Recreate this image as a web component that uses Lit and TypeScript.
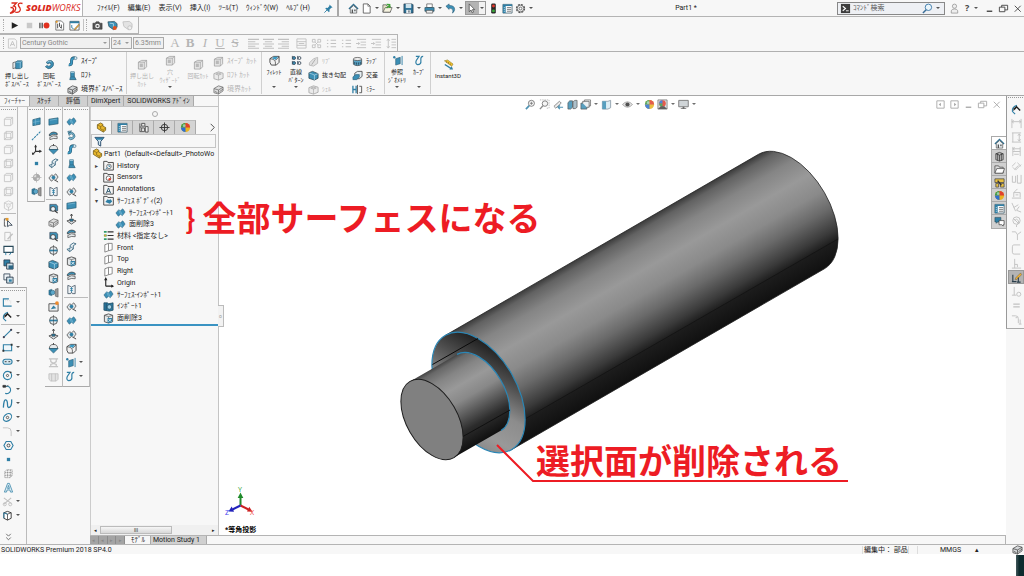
import { LitElement, html, css, svg, nothing } from "lit";
import { customElement, property } from "lit/decorators.js";
import { classMap } from "lit/directives/class-map.js";

/* Every glyph is drawn on a 12 x 12 grid. */
const surface = svg`<path d="M1 6.500 4 3l1.800 1.200L8.500 2 11 5.500 8 9.500 6.200 8 3.600 10z" fill="#3c8fb5" stroke="#2a5f7a" stroke-width=".6"/><path d="M4 3l2 5M5.800 4.200 8 9" stroke="#9bd0e6" stroke-width=".5" fill="none"/>`;
const cubeLine = svg`<path d="M1.500 3.500h7v7h-7zM3.500 1.500h7v7M1.500 3.500l2-2M8.500 3.500l2-2M8.500 10.500l2-2" fill="none" stroke="currentColor" stroke-width=".9"/>`;
const glyphs: Record<string, unknown> = {
  surface,
  cube: cubeLine,
  cubeB: svg`<path d="M3.500 1.500v7h7M3.500 8.500l-2 2M3.500 1.500h7v7l-2 2h-7v-7zM1.500 3.500h7v7M8.500 3.500l2-2" fill="none" stroke="currentColor" stroke-width=".9"/>`,
  cubeC: svg`<path d="M6 1l4.500 2v6L6 11.500 1.500 9V3zM1.500 3 6 5.500 10.500 3M6 5.500v6" fill="none" stroke="currentColor" stroke-width=".8"/><circle cx="6" cy="6" r="2" fill="#eee" stroke="currentColor" stroke-width=".6"/>`,
  plane: svg`<path d="M2 4l8-2v7l-8 1.500z" fill="#3c8fb5" stroke="#24576f" stroke-width=".7"/><path d="M5 3.300v6.500M2 7l8-1.500" stroke="#8cc4dc" stroke-width=".5"/>`,
  flat: svg`<path d="M1 3.500 11 2v6.500L1 10z" fill="#3c8fb5" stroke="#24576f" stroke-width=".7"/><path d="M2 4.600l8-1.200" stroke="#8cc4dc" stroke-width=".6" fill="none"/>`,
  axis: svg`<path d="M1 11 11 1" stroke="#2f7fa5" stroke-width="1.100" stroke-dasharray="2.500 1"/>`,
  coord: svg`<path d="M5 8V1.500M5 8h6M5 8l-3 3" stroke="#333" stroke-width="1.200" fill="none"/><path d="M3.500 3.500 5 .5l1.500 3zM9 6.300 12 8 9 9.700zM1 9l.3 3 2.700-1z" fill="#333"/>`,
  point: svg`<rect x="4.200" y="4.200" width="3.600" height="3.600" fill="#2f7fa5"/>`,
  target: svg`<circle cx="6" cy="6" r="3.500" fill="#ddd" stroke="#aaa"/><path d="M6 2.500V6h3.500A3.500 3.500 0 0 0 6 2.500zM6 6v3.500A3.500 3.500 0 0 1 2.500 6zM6 .5v2M6 9.500v2M.5 6h2M9.500 6h2" fill="#aaa" stroke="#aaa" stroke-width=".7"/>`,
  mate: svg`<path d="M1 3.500 4 2.500v7L1 8.500z" fill="#2f7fa5" stroke="#24576f" stroke-width=".5"/><circle cx="5" cy="6" r="2.500" fill="#5ba7c9" stroke="#24576f" stroke-width=".6"/><path d="M8 2.500l3-1v9.500l-3-1z" fill="#999" stroke="#555" stroke-width=".6"/>`,
  revolve: svg`<path d="M2.500 3.500Q5 .5 8.500 2q3 2 1.500 5.500Q8 11 4.500 10.500L1.500 8.500 3 7q2 1.500 4 .3 1.500-2-.5-3L4 5.500z" fill="#3c8fb5" stroke="#24576f" stroke-width=".7"/><path d="M3.500 3.300Q6 1.500 8.200 3.200" stroke="#bfe0ee" stroke-width=".7" fill="none"/>`,
  ring: svg`<path d="M3 3.500A4 4 0 1 1 2.500 9l1.800-1.500A2 2 0 1 0 5 4.500L3.500 6 2 1.500 6 1z" fill="#7cb9d4" stroke="#24576f" stroke-width=".7"/>`,
  sweep: svg`<path d="M2 9.500q3 .5 3-2.500V5q.2-3 3.500-3" fill="none" stroke="#24576f" stroke-width="3.200"/><path d="M2 9.500q3 .5 3-2.500V5q.2-3 3.500-3" fill="none" stroke="#3c9ac4" stroke-width="2"/><circle cx="9.300" cy="2.300" r="1.600" fill="#d9ecf4" stroke="#24576f" stroke-width=".6"/>`,
  loft: svg`<path d="M4 2h4v5l2 3.500H3L4 7z" fill="#3c8fb5" stroke="#24576f" stroke-width=".7"/><path d="M4 2.500h4" stroke="#bfe0ee"/><path d="M4.200 7.500h4.500" stroke="#24576f" stroke-width=".5"/>`,
  boundary: svg`<path d="M1 5l5-3 5 1.500v4L6 11 1 9.500z" fill="#d5d8da" stroke="#444" stroke-width=".8"/><path d="M1 5l5 1.500L11 3.500M6 6.500V11M2 8l3 1.500M7 8.500l4-3" fill="none" stroke="#444" stroke-width=".8"/>`,
  extrude: svg`<path d="M1 4l5-1.500V9L1 10.500z" fill="#dfe5e8" stroke="#444" stroke-width=".7"/><path d="M4 3.500 6 2h5v7l-2 1.500H4z" fill="#3c8fb5" stroke="#24576f" stroke-width=".7"/><path d="M4 3.500h5v7M9 3.500 11 2" stroke="#bfe0ee" stroke-width=".6" fill="none"/>`,
  cut: svg`<path d="M1.500 3.500 5 1.500h5.500v7L8 11H1.500z" fill="#e3e3e3" stroke="#777" stroke-width=".7"/><path d="M1.500 3.500H8V11M8 3.500l2.500-2" stroke="#777" stroke-width=".6" fill="none"/><rect x="3" y="5" width="3.400" height="3.800" fill="#aaa"/>`,
  fillet: svg`<path d="M1 4l4-2.500h6v6.500l-3 3H2.500L1 8z" fill="#f1f1f1" stroke="#333" stroke-width=".9"/><path d="M1 4q5 0 6 3.500V11M11 2 7 6" fill="none" stroke="#333" stroke-width=".7"/><path d="M5 2h5L7 5.500Q6 4 3.500 4z" fill="#3c9ac4"/>`,
  pattern: svg`<g fill="#3c9ac4" stroke="#345" stroke-width=".9"><path d="M1.500 1v4M1.500 6.500v4"/><circle cx="3.300" cy="3.300" r="1.600"/><circle cx="3.300" cy="8.800" r="1.600"/></g><g fill="#f3f3f3" stroke="#345" stroke-width=".9"><circle cx="9.200" cy="3.300" r="1.600"/><circle cx="9.200" cy="8.800" r="1.600"/><path d="M7.300 1v4M7.300 6.500v4"/></g>`,
  rib: svg`<path d="M1.500 10V7.500L6 3l4.500-1.500V8L6 11z" fill="#ddd" stroke="#999" stroke-width=".8"/><path d="M4 9.500 8 3.500" stroke="#999"/>`,
  draft: svg`<path d="M1 3l4-1.500L11 4v5L7 11 1 9z" fill="#3c8fb5" stroke="#24424f" stroke-width=".8"/><path d="M1 3l6 2.500V11M7 5.500 11 4" stroke="#cfe9f4" stroke-width=".6" fill="none"/>`,
  shell: svg`<path d="M1 4l5-2 5 1.500V9L6 11 1 9.500z" fill="#e7e7e7" stroke="#888" stroke-width=".8"/><path d="M3 4.500 6 3.400l3 1L6 5.600zM6 5.600V11" fill="#ccc" stroke="#888" stroke-width=".6"/>`,
  wrap: svg`<path d="M1.500 3.500v5.500c2 2 7 2 9 0V3.500" fill="#5ba7c9" stroke="#333" stroke-width=".7"/><ellipse cx="6" cy="3.300" rx="4.500" ry="1.700" fill="#eee" stroke="#333" stroke-width=".7"/><path d="M3 6.500v2.500M5 7v2.500M7 7v2.500M9 6.500v2.500" stroke="#123" stroke-width=".7"/>`,
  intersect: svg`<path d="M3 3.500 6 1.500h5V7L8 9.500H3z" fill="#e6eef2" stroke="#333" stroke-width=".8"/><path d="M1 7.500 4 5h4v3l-3 2.500H1z" fill="#3c8fb5" stroke="#24576f" stroke-width=".6"/>`,
  mirror: svg`<path d="M1 2v8M4.500 2v8M1 6h3.500" stroke="#2f7fa5" stroke-width="1.400"/><path d="M6 1v10" stroke="#333" stroke-width=".8"/><path d="M8 2.500h2.500v7H8" fill="none" stroke="#444" stroke-width=".9"/>`,
  refgeo: svg`<circle cx="2.500" cy="2.500" r="1.300" fill="#2f7fa5"/><path d="M4 4l5-1.500v7L4 11z" fill="#3c8fb5" stroke="#24576f" stroke-width=".6"/><path d="M11 1v10" stroke="#2f7fa5"/>`,
  curve: svg`<path d="M2 1.500h3.500L2.500 6Q1 9.500 4 10.500 8 10.500 7.500 6 7 1.500 10 1.500" fill="none" stroke="#2f7fa5" stroke-width="1.300"/>`,
  instant: svg`<path d="M1.500 2 5 1l6 4.500-1.500 2.500z" fill="#f0c030" stroke="#7a6410" stroke-width=".5"/><path d="M4 2.500v1.500M6 3.500V5M8 5v1.300" stroke="#5b4a08" stroke-width=".6"/><path d="M2 6l7 4.500" stroke="#2f7fa5" stroke-width="1.500"/><path d="M7 11.500h4L9.500 8z" fill="#2f7fa5"/>`,
  home: svg`<path d="M1 6.500 6 1.500l5 5" fill="none" stroke="#2f6f90" stroke-width="1.400"/><path d="M2.500 6v5h7V6L6 2.800z" fill="#eef4f7" stroke="#444" stroke-width=".7"/><path d="M4 7h1.500v4H4zM6.800 7h1.500v2H6.800z" fill="#555"/>`,
  doc: svg`<path d="M2.500 1h5L10 3.500V11H2.500z" fill="#fff" stroke="#555" stroke-width=".9"/><path d="M7.500 1v2.500H10" fill="none" stroke="#555" stroke-width=".7"/>`,
  open: svg`<path d="M1 2h3.500l1 1.500H9V10H1z" fill="#e8e3c8" stroke="#555" stroke-width=".8"/><path d="M1 10l2.500-5H11L9 10z" fill="#f6f3df" stroke="#555" stroke-width=".8"/><path d="M5 5.500 8 3M8.500 5.500V1.800L5 1.600" stroke="#3fa535" stroke-width="1.300" fill="none"/>`,
  save: svg`<path d="M1 1h9l1 1v9H1z" fill="#2d7296" stroke="#234" stroke-width=".7"/><path d="M3 1h6v4.500H3z" fill="#cfe3ec"/><path d="M3.500 7.500h5V11h-5z" fill="#e9eff2"/><path d="M6.500 8v2.500" stroke="#234"/>`,
  print: svg`<path d="M3 1h6v4H3z" fill="#fff" stroke="#444" stroke-width=".7"/><path d="M1 5h10v4H1z" fill="#3c8fb5" stroke="#24424f" stroke-width=".7"/><path d="M2.500 8h7v3h-7z" fill="#eee" stroke="#444" stroke-width=".7"/>`,
  undo: svg`<path d="M1 3.500 4.500 1v1.700Q10.500 2.500 10.500 7q0 2.500-2.500 4 .8-1.500.5-3Q8 5.500 4.500 5.500V7z" fill="#3c8fb5" stroke="#24576f" stroke-width=".6"/>`,
  arrow: svg`<path d="M3.500 1v8.500l2-1.800 1.300 3L8.200 10 7 7.200h2.500z" fill="#fff" stroke="#444" stroke-width=".8"/>`,
  traffic: svg`<rect x="3.500" y=".5" width="5" height="11" rx="1.500" fill="#262626"/><circle cx="6" cy="3.200" r="1.600" fill="#e0352b"/><circle cx="6" cy="8.600" r="1.600" fill="#3aa83a"/>`,
  sheet: svg`<path d="M1 1.500h10v9.500H1z" fill="#f5f8fa" stroke="#3c5a6a" stroke-width=".8"/><path d="M1 1.500h10v1.800H1zM1 3h3v8H1z" fill="#2f7fa5"/><path d="M5.500 5h4.500M5.500 7h4.500M5.500 9h4.500" stroke="#444" stroke-width=".7"/><path d="M2 5h1M2 7h1M2 9h1" stroke="#fff" stroke-width=".8"/>`,
  gear: svg`<circle cx="6" cy="6" r="4.300" fill="none" stroke="#555" stroke-width="1.500" stroke-dasharray="2.200 1.170"/><circle cx="6" cy="6" r="3.600" fill="#eee" stroke="#555" stroke-width=".8"/><circle cx="6" cy="6" r="1.500" fill="#fff" stroke="#555" stroke-width=".8"/>`,
  pin: svg`<path d="M7 1.500 10.500 5l-1.500.3-2 2 .2 1.700L6.500 10 2.500 6l.8-.8 1.700.2 2-2z" fill="#2f7fa5"/><path d="M4.500 7.500 1.500 10.500" stroke="#2f7fa5"/>`,
  user: svg`<circle cx="6" cy="3.500" r="2.300" fill="#eee" stroke="#999" stroke-width=".9"/><path d="M2.500 11V8.500Q3 6.500 6 6.500t3.500 2V11z" fill="#eee" stroke="#999" stroke-width=".9"/>`,
  min: svg`<path d="M3 9h6" stroke="currentColor" stroke-width="1.500"/>`,
  restore: svg`<path d="M1.500 4.500h6v5h-6zM4 4.500v-2h6.500v5h-3" fill="none" stroke="currentColor" stroke-width="1"/>`,
  close: svg`<path d="M3 3l6.500 6.500M9.500 3 3 9.500" stroke="currentColor" stroke-width="1"/>`,
  paneL: svg`<path d="M2 2h8v8H2z" fill="none" stroke="currentColor"/><path d="M6.500 4 4 6l2.500 2z" fill="currentColor"/>`,
  paneR: svg`<path d="M2 2h8v8H2z" fill="none" stroke="currentColor"/><path d="M5.500 4 8 6 5.500 8z" fill="currentColor"/>`,
  lens: svg`<circle cx="7" cy="4.700" r="3.500" fill="#eaf5fb" stroke="#3c78a8" stroke-width="1"/><path d="M4.500 7.300 1 11" stroke="#3c6f98" stroke-width="1.600"/>`,
  prompt: svg`<path d="M1 1h10v10H1z" fill="#3d3d3d"/><path d="M3 3.500 6 6 3 8.500" fill="none" stroke="#fff" stroke-width="1.200"/><path d="M6.500 8.500h3" stroke="#fff"/>`,
  play: svg`<path d="M3 2.500v7L10 6z" fill="#222"/>`,
  stop: svg`<path d="M3 3h6v6H3z" fill="#c9c9c9"/>`,
  rec: svg`<path d="M1 3v6M3.500 3v6" stroke="#555" stroke-width="1.500"/><circle cx="8.200" cy="6" r="3.200" fill="#e1301e"/>`,
  script: svg`<path d="M2 1h6l2.500 2.500V11H2z" fill="#fff" stroke="#555" stroke-width=".8"/><path d="M4 4v5M6 3v4l2 2M8 5v4" stroke="#333" stroke-width=".9" fill="none"/><circle cx="3" cy="2" r="1.200" fill="#e39a2d"/>`,
  scriptEdit: svg`<path d="M1 1.500h10V11H1z" fill="#fff" stroke="#444" stroke-width=".8"/><path d="M1 1.500h10v2H1z" fill="#2f7fa5"/><path d="M3 5.500v3l2 1" stroke="#2f7fa5" fill="none"/><path d="M10.500 4.500 6 9.500l-.5 1.500L7 10.500l4.500-5z" fill="#e3a838" stroke="#654" stroke-width=".4"/>`,
  camera: svg`<path d="M1 3.500h2.500L4.500 2h3l1 1.500H11V10H1z" fill="#555" stroke="#333" stroke-width=".6"/><circle cx="6" cy="6.600" r="2.500" fill="#f4f4f4"/><circle cx="6" cy="6.600" r="1.200" fill="#555"/>`,
  video: svg`<path d="M1 2l7-.5L11 4v4l-4 2.500L2 7z" fill="#3c8fb5" stroke="#24424f" stroke-width=".7"/><path d="M3 3.500l4 .5v4" stroke="#d9eef6" stroke-width=".7" fill="none"/><circle cx="8.500" cy="8.700" r="2.200" fill="#e1501e"/>`,
  videoOff: svg`<path d="M1 2l7-.5L11 4v4l-4 2.500L2 7z" fill="#e3e3e3" stroke="#bbb" stroke-width=".8"/><circle cx="8.500" cy="8.500" r="2.200" fill="#eee" stroke="#bbb" stroke-width=".8"/>`,
  note: svg`<path d="M1.500 1h7L10.500 3v8h-9z" fill="none" stroke="currentColor" stroke-width=".9"/><path d="M3.500 9 6 3.500 8.500 9M4.500 7.200h3" fill="none" stroke="currentColor"/>`,
  alignL: svg`<path d="M0 1.500h12M0 4h8M0 6.500h12M0 9h8M0 11.300h12" stroke="currentColor" stroke-width="1.100"/>`,
  alignC: svg`<path d="M0 1.500h12M2 4h8M0 6.500h12M2 9h8M0 11.300h12" stroke="currentColor" stroke-width="1.100"/>`,
  alignR: svg`<path d="M0 1.500h12M4 4h8M0 6.500h12M4 9h8M0 11.300h12" stroke="currentColor" stroke-width="1.100"/>`,
  fit: svg`<path d="M1 1h10v10H1zM1 4h10M1 8h10M3 6h6" fill="none" stroke="currentColor"/>`,
  stack: svg`<path d="M1.500 1.500h3v3h-3zM7.500 1.500h3v3h-3zM1.500 7.500h3v3h-3zM7.500 7.500h3v3h-3zM4.500 4.500l3 3M7.500 4.500l-3 3" fill="none" stroke="currentColor"/>`,
  list: svg`<path d="M1 2.500h1.500M1 6h1.500M1 9.500h1.500M5 2.500h6M5 6h6M5 9.500h6" stroke="currentColor" stroke-width="1.200"/>`,
  indent: svg`<path d="M1 1.500h10M5 4.500h6M5 7.500h6M1 10.500h10M0 6h4M2.500 4.500 4 6 2.500 7.500" fill="none" stroke="currentColor"/>`,
  spacing: svg`<path d="M2.500 1v10M1 3l1.500-2L4 3M1 9l1.500 2L4 9M6 1.500h5M6 4.500h5M6 7.500h5M6 10.500h5" fill="none" stroke="currentColor"/>`,
  zoomFit: svg`<circle cx="7" cy="4.700" r="3.300" fill="#f4f4f4" stroke="#555" stroke-width=".9"/><path d="M4.600 7.200 1 11" stroke="#2f7fa5" stroke-width="1.800"/><path d="M7 3v3.400M5.300 4.700h3.400" stroke="#555" stroke-width=".8"/>`,
  zoomArea: svg`<path d="M1 1h10v9H8" fill="none" stroke="#888" stroke-width=".7" stroke-dasharray="1.500 1"/><circle cx="6.500" cy="5" r="3" fill="#f4f4f4" stroke="#555" stroke-width=".9"/><path d="M4.300 7.300 1 11" stroke="#777" stroke-width="1.500"/>`,
  prevView: svg`<path d="M1 8 7 2.500 9 4.500 3 10z" fill="#e8e8e8" stroke="#555" stroke-width=".8"/><path d="M11 9H6M7.500 7 5.500 9l2 2" fill="none" stroke="#2f7fa5" stroke-width="1.300"/>`,
  section: svg`<path d="M1 4l2-2h3v7l-2 2H1z" fill="#3c8fb5" stroke="#333" stroke-width=".7"/><path d="M6.500 3l2-1.500H11V9l-2 1.500H6.500z" fill="#9fb6c2" stroke="#333" stroke-width=".7"/>`,
  views: svg`<path d="M1 4.500h6.500V11H1z" fill="#3c8fb5" stroke="#333" stroke-width=".7"/><path d="M3 4.500v-2h7V9H7.500" fill="#e8eef1" stroke="#333" stroke-width=".8"/><path d="M5 2.500V1h6.500v6.500H10" fill="none" stroke="#333" stroke-width=".7"/>`,
  display: svg`<path d="M1.500 2.500h6l3-1v8l-3 1.500h-6z" fill="#d9ecf4" stroke="#678" stroke-width=".8"/><path d="M1.500 2.500h4v8.500h-4z" fill="#3c8fb5"/>`,
  eye: svg`<path d="M.5 6Q6 0 11.500 6 6 12 .5 6z" fill="#ddd" stroke="#888" stroke-width=".8"/><circle cx="6" cy="6" r="2.300" fill="#333"/>`,
  appearance: svg`<circle cx="6" cy="6" r="5" fill="#e8b320"/><path d="M6 6V1a5 5 0 0 0-5 5z" fill="#3a9a4a"/><path d="M6 6V1a5 5 0 0 1 5 5z" fill="#e0402f"/><path d="M6 6H1a5 5 0 0 0 5 5z" fill="#2d6fd0"/><circle cx="4.500" cy="4" r="1.500" fill="#fff" opacity=".5"/>`,
  scene: svg`<path d="M1 1h10v10H1z" fill="#ddd" stroke="#555" stroke-width=".8"/><circle cx="6" cy="5" r="3.600" fill="#e0402f"/><path d="M6 5V1.400A3.600 3.600 0 0 0 2.400 5z" fill="#2d6fd0"/><path d="M2.400 5H6v3.600A3.600 3.600 0 0 1 2.400 5z" fill="#3a9a4a"/><path d="M1 11l3-3h4l3 3z" fill="#444"/>`,
  monitor: svg`<path d="M.8 1.500h10.400v7H.8z" fill="#c8ced2" stroke="#555" stroke-width=".9"/><path d="M5 8.500h2v1.500h2V11H3v-1h2z" fill="#555"/>`,
  part: svg`<path d="M1.500 3 5 1l2.500 1.500v2L10.500 6v3L8 11 1.500 7z" fill="#e7b62c" stroke="#6a5312" stroke-width=".8"/><path d="M1.500 3 5 5v2.500L8 9v2M5 5l2.500-1.500M8 8.500l2.500-2" fill="none" stroke="#6a5312" stroke-width=".6"/>`,
  config: svg`<path d="M2 1.500v9h2M2 5.500h2" fill="none" stroke="#555"/><path d="M4 1.500h3.500v3H4zM4 6.500h3v4H4zM8 5h3v6H8z" fill="#eee" stroke="#444" stroke-width=".9"/>`,
  cross: svg`<circle cx="6" cy="6" r="3.500" fill="none" stroke="#333"/><path d="M6 .5v11M.5 6h11" stroke="#333"/>`,
  funnel: svg`<path d="M1 1.500h10L7.300 6v5l-2.600-1.500V6z" fill="#cfe5ef" stroke="#246" stroke-width="1"/><path d="M1.500 2h9L9 4H3z" fill="#2f7fa5"/>`,
  folder: svg`<path d="M.8 1.500h3.700l.8 1.200h6V11H.8z" fill="#f4f4f4" stroke="#444" stroke-width="1"/><circle cx="6.500" cy="7" r="2.500" fill="none" stroke="#555" stroke-width=".8"/><path d="M6.500 5.500V7h1.500M3 9.500l2-1" stroke="#2f7fa5" fill="none"/>`,
  folderS: svg`<path d="M.8 1.500h3.700l.8 1.200h6V11H.8z" fill="#f4f4f4" stroke="#444" stroke-width="1"/><circle cx="6" cy="6.800" r="2.500" fill="#fff" stroke="#444" stroke-width=".8"/><circle cx="7.300" cy="8" r="1.400" fill="#e0402f"/>`,
  folderA: svg`<path d="M.8 1.500h3.700l.8 1.200h6V11H.8z" fill="#f4f4f4" stroke="#444" stroke-width="1"/><path d="M3.700 10 6 4.300 8.300 10M4.600 8.300h2.800" stroke="#234f66" fill="none"/>`,
  folderF: svg`<path d="M.8 1.500h3.700l.8 1.200h6V11H.8z" fill="#f4f4f4" stroke="#444" stroke-width="1"/><path d="M2.500 7.500 5 4.500l1.500 1 2-1L10 7 7.500 9.500z" fill="#2f7fa5"/>`,
  folderN: svg`<path d="M1 3h10v8H1z" fill="#eee" stroke="#444" stroke-width=".9"/><path d="M3 9l3-4 3 3z" fill="#2f7fa5"/><circle cx="9.800" cy="2.300" r="2" fill="#ef8a2b"/>`,
  material: svg`<path d="M1 2h3M1 6h3M1 10h3" stroke="#2f9a6a" stroke-width="2"/><path d="M5 2h6.500M5 6h6.500M5 10h6.500" stroke="#333" stroke-width="1.200"/><circle cx="2.500" cy="6" r="1.200" fill="#e7a62c"/>`,
  refplane: svg`<path d="M2 3l4-1.500V9.500L2 11zM6 1.500h4v7L6 9.500" fill="#fff" stroke="#777" stroke-width=".9"/>`,
  origin: svg`<path d="M3 10V2M3 10h8" stroke="#222" stroke-width="1.200" fill="none"/><path d="M1.200 3.500 3 0l1.800 3.500zM9 8.200 12 10l-3 1.800z" fill="#222"/>`,
  imported: svg`<path d="M1 2h4l1 1 5-1v8L7 11 1 10z" fill="#2d7ba3" stroke="#1c4458" stroke-width=".8"/><circle cx="7" cy="6.500" r="2.500" fill="#9fd0e4" stroke="#1c4458" stroke-width=".7"/><path d="M3.500 2.500v8" stroke="#1c4458" stroke-width=".7"/>`,
  delface: svg`<path d="M1.500 2.500 6 1l4.500 1.500v7L6 11 1.500 9.500z" fill="#e3e7e9" stroke="#444" stroke-width=".9"/><path d="M6 4v7M1.500 2.500 6 4l4.500-1.500" stroke="#444" stroke-width=".6" fill="none"/><path d="M5 5.500h5v4.500l-5 1z" fill="#2f7fa5"/><path d="M6 6.500l3 3M9 6.500l-3 3" stroke="#fff" stroke-width=".9"/>`,
  offset: svg`<path d="M1.500 4.500q4-4 8.500-1v2q-4-2-8.500 1z" fill="#3c8fb5" stroke="#333" stroke-width=".7"/><path d="M2 8q4-3 8-1v2.500q-4-1-8 1z" fill="#e6eaec" stroke="#333" stroke-width=".7"/>`,
  dome: svg`<path d="M1.500 6A4.500 4.500 0 0 1 10.500 6z" fill="#e6eaec" stroke="#444" stroke-width=".8"/><path d="M1 6h10L6 11z" fill="#3c8fb5" stroke="#24576f" stroke-width=".7"/><path d="M6 0v2" stroke="#444"/>`,
  ruled: svg`<path d="M1 8l3 2.500 4-3V4l3-2-3-1-3.500 2.500V7z" fill="#e6eef2" stroke="#2f5f78" stroke-width=".9"/><path d="M4 10.500V8M8 7.500 5 5" stroke="#2f5f78" stroke-width=".7"/>`,
  trim: svg`<path d="M1 6.500 4 3l2 1.200L8.500 2 11 5.500 8 9.500 6.200 8 3.600 10z" fill="#dfe5e8" stroke="#444" stroke-width=".8"/><circle cx="6" cy="6" r="2" fill="#2f7fa5"/><path d="M8 9l3 2" stroke="#333"/>`,
  knit: svg`<path d="M2 1.500l2.500 1 1.500 1 1.500-1 2.500-1v9H7L6 9l-1 1.500H2z" fill="#edf2f5" stroke="#345" stroke-width=".8"/><path d="M6 3.500V9M4.500 5h3M4.500 7h3" stroke="#2f7fa5" stroke-width=".9"/>`,
  magnify: svg`<path d="M2 1.500h7l1.500 2v5H2z" fill="#3c8fb5" stroke="#345" stroke-width=".7"/><circle cx="5.500" cy="6.500" r="2.600" fill="#eef6fa" stroke="#333" stroke-width=".9"/><path d="M7.500 8.500l3 2.500" stroke="#333" stroke-width="1.200"/>`,
  sphere: svg`<circle cx="6" cy="6" r="4.300" fill="#e6eaec" stroke="#444" stroke-width=".9"/><path d="M1.700 6h8.600" stroke="#2f7fa5" stroke-width="1.800"/><path d="M6 0v12" stroke="#444" stroke-width=".6"/>`,
  press: svg`<path d="M1 7.500 6 6l5 1.500L6 11z" fill="#dfe3e5" stroke="#333" stroke-width=".8"/><path d="M4 5.500h4L7.500 8h-3z" fill="#2f7fa5" stroke="#333" stroke-width=".6"/><path d="M6 0v5M4.700 2 6 0l1.300 2" stroke="#333" fill="none" stroke-width=".8"/>`,
  smart: svg`<path d="M1.500 8Q1 3 6.500 1.500M1.500 8l3 3" fill="none" stroke="#2f7fa5" stroke-width="1.200"/><path d="M3.500 5.500 6 3l4 4" stroke="#222" stroke-width="1.600" fill="none"/><path d="M2.500 7.500l.3-3.300L6 4.500z" fill="#222"/>`,
  sketch: svg`<path d="M10.500 10H1.500V2h6" fill="none" stroke="#2f7fa5" stroke-width="1.200"/><path d="M3.500 4h6v4" fill="none" stroke="#bbb" stroke-width=".5" stroke-dasharray="1 1"/>`,
  line: svg`<path d="M2 10 10 2" stroke="#2f7fa5" stroke-width="1.200"/><circle cx="2" cy="10" r="1.200" fill="#445"/><circle cx="10" cy="2" r="1.200" fill="#445"/>`,
  rect: svg`<path d="M1.500 3h9v6.500h-9z" fill="#eef6fa" stroke="#2f7fa5" stroke-width="1.200"/><path d="M.5 8.500h2v2h-2zM9.500 2h2v2h-2z" fill="#333"/>`,
  slot: svg`<rect x="1" y="3.500" width="10" height="5.500" rx="2.700" fill="#d6e7ef" stroke="#2f7fa5" stroke-width="1.200"/><path d="M3 6.200h2M7 6.200h2" stroke="#333"/>`,
  circle: svg`<circle cx="6" cy="6" r="4.500" fill="none" stroke="#2f7fa5" stroke-width="1.200"/><circle cx="6" cy="6" r="1.200" fill="none" stroke="#333" stroke-width=".8"/><circle cx="9.500" cy="2.500" r="1" fill="#333"/>`,
  arc: svg`<path d="M2 2.500h3a4 4 0 1 1-1.500 7.500" fill="none" stroke="#2f7fa5" stroke-width="1.200"/><path d="M1 1.500h3v2H1zM5 3l2-2" fill="#333" stroke="#333" stroke-width=".8"/>`,
  spline: svg`<path d="M1.500 10.500Q2 1.500 4 2t2 5 2.500 3T10.500 1.500" fill="none" stroke="#2f7fa5" stroke-width="1.400"/>`,
  ellipse: svg`<ellipse cx="6" cy="6" rx="5" ry="3.600" transform="rotate(-40 6 6)" fill="none" stroke="#2f7fa5" stroke-width="1.200"/><circle cx="6" cy="6" r="1.300" fill="none" stroke="#333" stroke-width=".8"/>`,
  corner: svg`<path d="M1 2h5q4 0 4 4v5" fill="none" stroke="currentColor"/>`,
  polygon: svg`<path d="M3.500 1.700h5L11 6l-2.500 4.300h-5L1 6z" fill="none" stroke="#2f7fa5" stroke-width="1.200"/><circle cx="6" cy="6" r="1.600" fill="none" stroke="#333" stroke-width=".9"/>`,
  grid: svg`<path d="M2 4l2-2h6v6l-2 2.500H2zM5 2v8M8 2v8M2 5h8M2 8h8" fill="none" stroke="#888" stroke-width=".8" stroke-dasharray="1.500 .5"/>`,
  letter: svg`<path d="M1.500 11 5 1.500h2L10.500 11H8.200L7.500 8.700h-3L3.800 11zM5 7h2L6 3.800z" fill="#dcecf4" stroke="#2f7fa5" stroke-width=".8"/>`,
  scissors: svg`<path d="M2 2l8 6M2 9l8-7" stroke="currentColor" stroke-width="1.200"/><circle cx="3" cy="9" r="1.700" fill="none" stroke="currentColor"/><circle cx="9" cy="9" r="1.700" fill="none" stroke="currentColor"/>`,
  convert: svg`<path d="M2 3l4-1.500L10 3v6l-4 2-4-2z" fill="#fff" stroke="#333"/><path d="M6 4.500V11M2 3l4 1.500L10 3" stroke="#333" fill="none" stroke-width=".8"/><path d="M6 4.500 2 3v6" stroke="#2f7fa5" fill="none"/>`,
  cursorBox: svg`<path d="M1.500 5V2h3M1.500 5v5h2" fill="none" stroke="#555"/><path d="M3 1h3v3H3z" fill="#e39a2d"/><path d="M5 4v6.500l2-1.500h3z" fill="#fff" stroke="#234" stroke-width=".9"/>`,
  docEdit: svg`<path d="M2 1.500h6v9H2z" fill="none" stroke="currentColor"/><path d="M10.500 3 5 9" stroke="currentColor" stroke-width="1.500"/>`,
  callout: svg`<path d="M1 1.500h10V8H1z" fill="#fff" stroke="#2a4a5a" stroke-width="1.200"/><path d="M3 8v3M9 8l-2 3" stroke="#2f7fa5"/>`,
  layers: svg`<path d="M1 1h6.500v6.500H1z" fill="#2f7fa5" stroke="#234" stroke-width=".8"/><path d="M4 4.500h7V11H4z" fill="#cfe0e8" stroke="#234" stroke-width=".9"/><path d="M6 7h5v4H6z" fill="#2d6684"/>`,
  layersB: svg`<path d="M1 1h6.500v6.500H1z" fill="#eef3f6" stroke="#345" stroke-width=".9"/><path d="M4 4.500h7V11H4z" fill="#cfe0e8" stroke="#234" stroke-width=".9"/><path d="M6.500 7h3v2.500h-3z" fill="#2f7fa5"/>`,
  cubes: svg`<path d="M1 3h10v6l-2 2H3L1 9z" fill="#e3e3e3" stroke="#bbb" stroke-width=".8"/><path d="M4 3v8M8 3v8" stroke="#bbb" stroke-width=".8"/>`,
  bench: svg`<path d="M1 2h10M3 2v3l3 2 3-2V2M3 10V8l3-1 3 1v2M1 10.500h10" fill="none" stroke="#c4c4c4" stroke-width="1.300"/>`,
  chev: svg`<path d="M3.500 2 6 4.500 8.500 2M3.500 6 6 8.500 8.500 6" fill="none" stroke="#666" stroke-width="1"/>`,
  right: svg`<path d="M4 2l4 4-4 4" fill="none" stroke="#444" stroke-width="1"/>`,
  dim: svg`<path d="M1 1v10M11 1v10M1 4h10M3 2.500 1 4l2 1.500M9 2.500 11 4 9 5.500" fill="none" stroke="currentColor"/>`,
  dimV: svg`<path d="M1 1h10M1 11h10M2 1v10M9 2v8M7.500 4 9 2l1.500 2M7.500 8 9 10l1.500-2" fill="none" stroke="currentColor"/>`,
  dimB: svg`<path d="M2 1v10M10 1v10M2 3h8M2 6h8M3.500 9h5M4 1.500 2 3l2 1.500" fill="none" stroke="currentColor"/>`,
  dimA: svg`<path d="M1 7l4-4M4 10l4-4M5 11l6-6M7 3l4 4M2 8l3 3" fill="none" stroke="currentColor"/>`,
  dimU: svg`<path d="M1.500 2v7h3.500V2M7 1v9h4V1" fill="none" stroke="currentColor"/>`,
  dimD: svg`<path d="M1 11h10M3 10V5h7v5M3 5l4-4M5 7.500h3" fill="none" stroke="currentColor"/>`,
  dimE: svg`<path d="M1 1l4 9M3 6l5-3M6 9l5 2M9 5l-3 4" fill="none" stroke="currentColor"/>`,
  dimF: svg`<circle cx="6" cy="5" r="4" fill="none" stroke="currentColor"/><path d="M4 5q2-3 4 0t-2 5v2M3 3l5 5" fill="none" stroke="currentColor"/>`,
  dimG: svg`<path d="M1 2h4l2 3v6M7 5l4-3" fill="none" stroke="currentColor"/>`,
  dimH: svg`<path d="M10 1H3Q1.500 1 1.500 3v6q0 2 2 2H10" fill="none" stroke="currentColor"/>`,
  perp: svg`<path d="M1 11h10M4 11V1M7 10V7M4 7h3" fill="none" stroke="currentColor"/>`,
  pencil: svg`<path d="M10.500 1 5 6.500 4.500 8.500l2-.5L11.500 3z" fill="#f0b030" stroke="#654" stroke-width=".5"/><path d="M2 3v7M1 10.500h5M8 6v5M6.500 11h4" stroke="#2a3f4c" stroke-width="1.200"/>`,
  perpEye: svg`<path d="M1 10h5M3.500 10V1" fill="none" stroke="currentColor"/><circle cx="8.500" cy="9" r="2.200" fill="none" stroke="currentColor"/>`,
  equal: svg`<path d="M2.500 4.500h7M2.500 7.500h7" stroke="currentColor" stroke-width="1.100"/>`,
  chain: svg`<path d="M1 2h4q3 0 3 3v5M10 6v5M5 4h2M8.500 11h3" fill="none" stroke="currentColor"/>`,
  can: svg`<path d="M2 3l4-1.500L10 3v6.500L6 11 2 9.500z" fill="#bbb" stroke="#333" stroke-width=".8"/><path d="M2 3l4 1.500L10 3M6 4.500V11M4 2.500v8M8 2.500v8" stroke="#333" fill="none" stroke-width=".8"/>`,
  folderOpen: svg`<path d="M1 2h4l1 1.500h4V10H1z" fill="#ddd" stroke="#444" stroke-width=".8"/><path d="M1 10l2-5h8.500l-2 5z" fill="#fff" stroke="#444" stroke-width=".8"/>`,
  palette: svg`<path d="M1 2h10v4H1z" fill="#e8c040" stroke="#444" stroke-width=".8"/><path d="M2 7h3v4H2zM7 7h4v4H7z" fill="#e8c040" stroke="#444" stroke-width=".8"/><path d="M4 4l4 5" stroke="#333" stroke-width="1.500"/>`,
  chat: svg`<path d="M1 1.500h6.500v5H4L2.500 8V6.500H1z" fill="#2f7fa5" stroke="#24424f" stroke-width=".6"/><path d="M5.500 5H11v4.500h-1V11L8.500 9.500h-3z" fill="#fff" stroke="#444" stroke-width=".8"/>`,
};

@customElement("cad-icon")
export class CadIcon extends LitElement {
  static styles = css`
    :host { display: inline-flex; flex: none; width: 11px; height: 11px; }
    svg { display: block; width: 100%; height: 100%; overflow: visible; }
  `;
  @property() name = "";
  render() {
    return html`<svg viewBox="0 0 12 12" aria-hidden="true">${glyphs[this.name] ?? nothing}</svg>`;
  }
}

/* "name" draws a tool, "name!" a disabled one, "name>" one with a menu arrow, "name*" a pressed one, "-" a rule. */
const railA = ["cube!", "cubeB!", "cube!", "cubeB!", "cube!", "cubeB!", "cubeC!", "-", "cursorBox", "docEdit!", "callout", "layers", "layersB"];
const railSketch = ["sketch>", "smart>", "-", "line>", "rect>", "slot>", "circle>", "arc>", "spline>", "ellipse>", "corner!>", "polygon", "point", "grid", "letter", "scissors!>", "convert>"];
const railB = ["plane", "axis", "coord", "point", "target", "mate"];
const railC = ["flat", "offset", "dome", "ruled", "trim", "knit", "-", "magnify", "boundary!", "magnify", "sphere", "draft", "delface", "mate", "folderN", "sphere", "press", "dome", "bench", "cubes"];
const railD = ["surface", "ring", "sweep", "loft", "surface", "trim", "flat", "press", "offset", "ruled", "delface", "offset", "knit", "-", "trim", "surface", "trim", "fillet", "refgeo>", "curve>"];
const railRight = ["smart", "dim!", "dimV!", "dimB!", "dimA!", "dimU!", "dimD!", "dimE!", "dimF!", "dimG!", "dimH!", "perp!", "pencil*", "perpEye!", "equal!", "chain!"];
const quick = ["home", "doc>", "open>", "save>", "print>", "undo>", "arrow*>", "traffic", "sheet", "gear>"];
const hud = ["zoomFit", "zoomArea", "prevView", "section", "views>", "display>", "eye>", "appearance", "scene>", "monitor>"];

const tree: [number, string, string, string][] = [
  [0, "", "part", "Part1  (Default<<Default>_PhotoWo"],
  [1, "▸", "folder", "History"],
  [1, "", "folderS", "Sensors"],
  [1, "▸", "folderA", "Annotations"],
  [1, "▾", "folderF", "ｻｰﾌｪｽ ﾎﾞﾃﾞｨ(2)"],
  [2, "", "surface", "ｻｰﾌｪｽ-ｲﾝﾎﾟｰﾄ1"],
  [2, "", "surface", "面削除3"],
  [1, "", "material", "材料 <指定なし>"],
  [1, "", "refplane", "Front"],
  [1, "", "refplane", "Top"],
  [1, "", "refplane", "Right"],
  [1, "", "origin", "Origin"],
  [1, "", "surface", "ｻｰﾌｪｽ-ｲﾝﾎﾟｰﾄ1"],
  [1, "", "imported", "ｲﾝﾎﾟｰﾄ1"],
  [1, "", "delface", "面削除3"],
];

@customElement("app-root")
export class AppRoot extends LitElement {
  static styles = css`
    :host {
      display: block;
      font: 7px/8px Roboto, "Noto Sans CJK JP", sans-serif;
      color: #222;
      background: #fff;
    }
    * { box-sizing: border-box; }
    button, input, select {
      font: inherit; color: inherit; margin: 0; padding: 0; border: 0; background: none;
      border-radius: 0; appearance: none; white-space: nowrap;
    }
    .app { display: flex; flex-direction: column; height: 100vh; padding-bottom: 22px; position: relative; overflow: hidden; }
    .bar { display: flex; align-items: center; background: #f7f7f7; flex: none; }
    .tool { display: flex; align-items: center; justify-content: center; height: 14px; width: 14px; flex: none; }
    .menu { width: 21px; justify-content: flex-start; padding-left: 1px; gap: 3px; }
    .menu::after { content: ""; border: 2px solid transparent; border-top-color: #555; border-bottom: 0; flex: none; }
    .off { color: #b4b4b4; }
    .off cad-icon { filter: grayscale(1); opacity: .8; }
    .on { background: #b4b4b4; box-shadow: inset 0 0 0 1px #999; }
    .on.menu { background: linear-gradient(90deg, #b4b4b4 14px, #f2f2f2 14px); }
    .grip { align-self: stretch; width: 0; border-left: 1px dotted #aaa; margin: 2px 0; flex: none; }

    .title { height: 17px; border-bottom: 1px solid #b4b4b4; }
    .brand { display: flex; align-items: center; gap: 3px; width: 83px; height: 16px; padding-left: 9px; border-right: 1px solid #b4b4b4; color: #da291c; font: italic 9px/16px "Open Sans", sans-serif; background: #fff; }
    .brand svg { width: 14px; height: 14px; flex: none; }
    .brand b { font-weight: 800; }
    .menus { display: flex; align-items: center; gap: 8px; padding-left: 14px; width: 256px; height: 16px; border-right: 2px solid #a8a8a8; flex: none; }
    .menus cad-icon { margin-left: auto; margin-right: 3px; }
    .quick { display: flex; padding-left: 7px; }
    .doc { flex: 1; text-align: center; }
    .search { display: flex; align-items: center; gap: 2px; width: 108px; height: 13px; border: 1px solid #888; background: #eef0f4; padding: 0 2px; }
    .search input { flex: 1; min-width: 0; height: 11px; }
    .search input::placeholder { color: #555; opacity: 1; }
    .sys { display: flex; align-items: center; padding-left: 2px; color: #444; }
    .help { font: bold 9px/14px "Open Sans", sans-serif; padding-left: 4px; gap: 5px; }

    .macro { height: 17px; }
    .macrobox { display: flex; align-items: center; height: 17px; width: 139px; padding-left: 3px; border: 1px solid #b4b4b4; border-width: 0 1px 1px 0; gap: 1px; }
    .macrobox .grip { margin-right: 2px; }
    .fontbar { height: 18px; border-bottom: 1px solid #b0b0b0; }
    .fontbox { display: flex; align-items: center; height: 17px; padding: 0 4px 0 3px; border: 1px solid #b4b4b4; border-width: 1px 1px 0 0; color: #b5b5b5; width: 398px; gap: 1px; }
    .fontbox .serif:first-of-type { margin-left: 2px; }
    .field { height: 12px; border: 1px solid #aaa; color: #888; padding-left: 1px; background: #f0f0f0; font-size: 7px; }
    .face { width: 90px; }
    .size { width: 21px; }
    .gap { width: 31px; margin-right: 3px; }
    .combo { display: flex; align-items: center; position: relative; color: #888; }
    .combo::after { content: ""; position: absolute; right: 3px; border: 2px solid transparent; border-top-color: #999; border-bottom: 0; }
    .serif { font: 13px/14px "Liberation Serif", serif; }
    .bold { font-weight: bold; } .ital { font-style: italic; } .under { text-decoration: underline; } .strike { text-decoration: line-through; }
    .vr { width: 1px; height: 12px; background: #c4c4c4; margin: 0 1px; }

    .ribbon { height: 44px; border-bottom: 1px solid #a8a8a8; align-items: stretch; }
    .group { display: flex; padding: 2px 0 0 1px; border-right: 1px solid #d0d0d0; margin-bottom: 1px; }
    .group.last { border: 0; }
    .big { display: flex; flex-direction: column; align-items: center; width: 32px; padding-top: 5px; text-align: center; position: relative; font-size: 6px; }
    .big span { display: block; margin-top: 2px; }
    .big.drop { padding-top: 1px; }
    .big.thin { width: 22px; }
    .big.mid { width: 28px; }
    .big.drop::after { content: ""; position: absolute; bottom: 6px; border: 2px solid transparent; border-top-color: #555; border-bottom: 0; }
    .smalls { display: grid; grid-auto-rows: 14px; }
    .small { display: flex; align-items: center; gap: 3px; }
    .s1 { width: 61px; padding-left: 2px; } .s2 { width: 49px; padding-left: 1px; }
    .s3 { width: 45px; padding-left: 1px; font-size: 6px; } .s4 { width: 32px; font-size: 6px; }

    .work { display: grid; grid-template: 11px minmax(0, 1fr) 9px / 90px 129px minmax(0, 1fr) 18px; flex: 1; min-height: 0; position: relative; background: #f7f7f7; }
    .tabs { grid-area: 1 / 1 / 2 / 3; display: flex; border-right: 1px solid #c4c4c4; border-bottom: 1px solid #c4c4c4; }
    .tab { padding: 0 7px; border-right: 1px solid #aaa; background: #d0d0d0; font-size: 7px; }
    .tab.sel { background: #f7f7f7; padding: 0 4px; color: #444; }
    .tab.latin { padding: 0 3px; }
    .rails { grid-area: 2 / 1 / 4 / 2; display: flex; align-items: flex-start; }
    .stack { width: 27px; align-self: stretch; display: flex; flex-direction: column; }
    .rail { display: flex; flex-direction: column; padding: 0 1px; width: 18px; border-right: 1px solid #bbb; flex: none; }
    .rail::before { content: ""; border-top: 1px dotted #999; margin: 2px 0 4px; }
    .rail hr { width: 100%; height: 1px; border: 0; background: #bbb; margin: 1px 0; flex: none; }
    .rail.boxed { border-bottom: 1px solid #aaa; padding-bottom: 3px; border-left: 1px solid #bbb; }
    .rail.wide { width: 27px; }
    .rail.joined { border-left: 0; border-bottom: 1px solid #aaa; padding-bottom: 3px; }
    .rail.sketch { width: 27px; border-top: 1px solid #aaa; margin-top: 2px; flex: 1; }
    .rail.sketch .more { margin-top: auto; }

    .panel { grid-area: 2 / 2 / 3 / 3; display: flex; flex-direction: column; border-right: 1px solid #c4c4c4; border-left: 1px solid #ccc; min-width: 0; }
    .knob { height: 13px; display: flex; align-items: center; justify-content: center; flex: none; }
    .knob::after { content: ""; width: 4px; height: 4px; border: 1px solid #aaa; border-radius: 50%; }
    .ptabs { display: flex; height: 14px; flex: none; }
    .ptabs button { width: 21px; display: flex; align-items: center; justify-content: center; background: #d4d4d4; border-right: 1px solid #aaa; border-top: 1px solid #bbb; }
    .ptabs button.sel { background: #f7f7f7; }
    .ptabs button.more { margin-left: auto; background: none; border: 0; width: 12px; }
    .filter { display: flex; align-items: center; height: 14px; border: 1px solid #c4c4c4; padding-left: 2px; margin-right: 2px; flex: none; }
    .filter input { flex: 1; min-width: 0; height: 10px; }
    .tree { display: grid; grid-auto-rows: minmax(0, 1fr); height: 176px; margin: 0; padding: 0; list-style: none; flex: none; }
    .node { display: flex; align-items: center; gap: 3px; white-space: pre; padding-left: 1px; }
    .node i { width: 8px; font-style: normal; font-size: 6px; text-align: center; color: #444; flex: none; }
    .node.d0 { gap: 1px; }
    .node.d2 { padding-left: 13px; }
    .rollback { height: 2px; background: #3a93c2; flex: none; }
    .hscroll { margin-top: auto; height: 10px; display: flex; align-items: center; justify-content: space-between; padding: 0 3px; background: #f0f0f0; font-size: 5px; }
    .thumb { width: 72px; height: 8px; border: 1px solid #bbb; background: linear-gradient(#f6f6f6, #d8d8d8); margin: 0 auto 0 3px; text-align: center; line-height: 6px; }

    .view { grid-area: 1 / 3 / 3 / 4; position: relative; background: #fff; min-width: 0; }
    .view > svg { position: absolute; inset: 0; width: 100%; height: 100%; }
    .hud { position: absolute; top: 1px; left: 304px; display: flex; opacity: .85; }
    .wins { position: absolute; top: 1px; right: 3px; display: flex; color: #aaa; }
    .pane { position: absolute; top: 40px; right: 0; display: flex; flex-direction: column; border: 1px solid #aaa; border-right: 0; }
    .pane button { width: 14px; height: 13px; display: flex; align-items: center; justify-content: center; background: #d0d0d0; border-bottom: 1px solid #aaa; }
    .pane button:first-child { background: #fff; }
    .pane button:last-child { border-bottom: 0; }
    .orient { position: absolute; left: 6px; bottom: 1px; font-weight: bold; color: #000; }

    .red { position: absolute; display: flex; gap: 7px; color: #ed1c24; font: bold 34px/40px "Noto Sans CJK JP", sans-serif; white-space: nowrap; }
    .note1 { left: 185px; top: 101px; }
    .note2 { left: 317px; top: 344px; }
    .brace { font-size: 28px; }
    .handle { position: absolute; left: 218px; top: 209px; width: 6px; height: 22px; border: 1px solid #bbb; border-left: 0; background: #f2f2f2; display: flex; align-items: center; justify-content: center; color: #999; font-size: 5px; }

    .bottom { grid-area: 3 / 2 / 4 / 4; display: flex; border: 1px solid #b4b4b4; border-width: 1px 1px 0 0; }
    .nav { display: flex; width: 35px; background: #a4a4a4; color: #888; font-size: 5px; }
    .nav button { flex: 1; border-right: 1px solid #8c8c8c; }
    .bottom .model { padding: 0 6px; width: 25px; }
    .bottom .motion { padding: 0 2px; background: #d0d0d0; border-left: 1px solid #aaa; border-right: 1px solid #aaa; width: 57px; text-align: left; }
    .right { grid-area: 1 / 4 / 4 / 5; display: flex; }
    .right .rail { border-left: 1px solid #999; border-right: 0; border-bottom: 1px solid #aaa; height: 233px; }
    .right .tool { width: 16px; }
    .right .rail::before { margin: 1px 0 4px; }

    .status { height: 10px; border-top: 1px solid #b4b4b4; justify-content: space-between; padding-left: 1px; }
    .cells { display: flex; align-items: center; height: 9px; }
    .cell { border-left: 1px solid #ddd; border-right: 1px solid #ddd; padding-left: 1px; width: 47px; margin-right: 8px; white-space: nowrap; }
    .units { border-left: 1px solid #ddd; width: 93px; padding-left: 22px; display: flex; align-items: center; gap: 14px; }
    .corner { position: absolute; right: 0; bottom: 0; width: 8px; height: 21px; background: linear-gradient(90deg, #44595c, #0d2b2e 40%); }
  `;

  tool(spec: string) {
    if (spec === "-") return html`<hr />`;
    const name = spec.replace(/[^a-zA-Z]/g, "");
    return html`<button
      class=${classMap({ tool: true, off: spec.includes("!"), on: spec.includes("*"), menu: spec.includes(">") })}
      aria-label=${name}
    ><cad-icon name=${name}></cad-icon></button>`;
  }

  big(icon: string, lines: string[], cls = "") {
    return html`<button class="big ${cls}"><cad-icon name=${icon}></cad-icon><span>${lines.map((l, i) => html`${i ? html`<br />` : nothing}${l}`)}</span></button>`;
  }

  smalls(cls: string, items: [string, string, boolean?][]) {
    return html`<div class="smalls ${cls}">${items.map(
      ([icon, label, off]) => html`<button class=${classMap({ small: true, off: !!off })}><cad-icon name=${icon}></cad-icon>${label}</button>`
    )}</div>`;
  }

  model() {
    return html`<svg viewBox="219 96 787 439" role="img" aria-label="Part1">
      <defs>
        <linearGradient id="outer" gradientUnits="userSpaceOnUse" x1="445.500" y1="335.300" x2="511.500" y2="449.700">
          <stop offset="0" stop-color="#3c3c3c"/><stop offset=".05" stop-color="#626262"/><stop offset=".17" stop-color="#858585"/>
          <stop offset=".32" stop-color="#999"/><stop offset=".48" stop-color="#8a8a8a"/><stop offset=".62" stop-color="#6a6a6a"/>
          <stop offset=".78" stop-color="#3a3a3a"/><stop offset=".86" stop-color="#1c1c1c"/><stop offset="1" stop-color="#101010"/>
        </linearGradient>
        <linearGradient id="inner" gradientUnits="userSpaceOnUse" x1="410" y1="381.400" x2="454" y2="457.600">
          <stop offset="0" stop-color="#444"/><stop offset=".05" stop-color="#686868"/><stop offset=".17" stop-color="#858585"/>
          <stop offset=".32" stop-color="#999"/><stop offset=".48" stop-color="#888"/><stop offset=".64" stop-color="#5a5a5a"/>
          <stop offset=".8" stop-color="#2c2c2c"/><stop offset="1" stop-color="#101010"/>
        </linearGradient>
        <linearGradient id="bore" gradientUnits="userSpaceOnUse" x1="445.500" y1="335.300" x2="511.500" y2="449.700">
          <stop offset="0" stop-color="#141414"/><stop offset=".16" stop-color="#242424"/><stop offset=".34" stop-color="#505050"/>
          <stop offset=".55" stop-color="#8c8c8c"/><stop offset=".75" stop-color="#999"/><stop offset="1" stop-color="#787878"/>
        </linearGradient>
      </defs>
      <path d="M445.500 335.300 758.500 154.300A66 38 60 0 1 824.500 268.700L511.500 449.700z" fill="url(#outer)" stroke="#222" stroke-width=".8"/>
      <path d="M525 419 838 239" stroke="#151515"/>
      <ellipse cx="478.500" cy="392.500" rx="66" ry="38" transform="rotate(60 478.500 392.500)" fill="url(#bore)" stroke="#2b86b5" stroke-width="1.200"/>
      <path d="M432.500 364.500 478 338.500" stroke="#0a0a0a"/>
      <path d="M410 381.400 457 354.400A44 25.400 60 0 1 501 430.600L454 457.600z" fill="url(#inner)"/>
      <path d="M457 354.400A44 25.400 60 0 1 501 430.600" fill="none" stroke="#2b86b5" stroke-width="1.200"/>
      <path d="M463 436.500 510 410" stroke="#111"/>
      <ellipse cx="432" cy="419.500" rx="44" ry="25.400" transform="rotate(60 432 419.500)" fill="#808080" stroke="#1d1d1d" stroke-width="1"/>
      <path d="M497 445l36 36h315" fill="none" stroke="#ed1c24" stroke-width="2"/>
      <path d="M240.500 505.500V496" stroke="#1f8a2a" stroke-width="2"/><path d="M237.700 498l2.800-5.500 2.800 5.500z" fill="#1f8a2a"/>
      <path d="M240.500 505.500l8 4" stroke="#c22" stroke-width="2"/><path d="M247 511.500l5.500.3-3.200-5z" fill="#c22"/>
      <path d="M240.500 505.500l-8 4" stroke="#22b" stroke-width="2"/><path d="M234 511.800l-5.500-.3 3.200-5z" fill="#22b"/>
      <g font-family="Noto Sans" font-size="7"><text x="238" y="492" fill="#4a4">Y</text><text x="250" y="515" fill="#e44">X</text><text x="225" y="515" fill="#44e">Z</text></g>
    </svg>`;
  }

  render() {
    return html`<div class="app">
      <header class="bar title">
        <div class="brand">
          <svg viewBox="0 0 14 12" aria-hidden="true"><path d="M2.500 1H7.500L4.500 4Q7.500 4.500 6.500 7.500 5.500 10.500 1 11.300 4.500 9.500 4.500 7.300 4.500 5.300 1.500 5.500M13.500 1.500Q9.500.5 9.300 2.800 9.500 4.300 11 6 12 8.200 10.500 9.500 8.500 11 6 10" fill="none" stroke="#da291c" stroke-width="1.300"/></svg>
          <span><b>SOLID</b>WORKS</span>
        </div>
        <nav class="menus">
          ${["ﾌｧｲﾙ(F)", "編集(E)", "表示(V)", "挿入(I)", "ﾂｰﾙ(T)", "ｳｨﾝﾄﾞｳ(W)", "ﾍﾙﾌﾟ(H)"].map((m) => html`<button>${m}</button>`)}
          <cad-icon name="pin"></cad-icon>
        </nav>
        <div class="quick">${quick.map((q) => this.tool(q))}</div>
        <div class="doc">Part1 *</div>
        <label class="search"><cad-icon name="prompt"></cad-icon><input aria-label="ｺﾏﾝﾄﾞ検索" placeholder="ｺﾏﾝﾄﾞ検索" />${this.tool("lens>")}</label>
        <div class="sys">${this.tool("user")}<button class="tool menu help">?</button>${["min", "restore", "close"].map((n) => this.tool(n))}</div>
      </header>

      <div class="bar macro">
        <div class="macrobox">
          <span class="grip"></span>${["play", "stop", "rec", "script", "scriptEdit"].map((n) => this.tool(n))}
          <span class="vr"></span><span class="grip"></span>${["camera", "video", "videoOff"].map((n) => this.tool(n))}
        </div>
      </div>

      <div class="bar fontbar">
        <div class="fontbox">
          <span class="grip"></span>${this.tool("note!")}
          <label class="combo"><select class="field face" aria-label="Font"><option>Century Gothic</option></select></label>
          <label class="combo"><select class="field size" aria-label="Size"><option>24</option></select></label>
          <input class="field gap" aria-label="Height" value="6.35mm" />
          <button class="tool serif">A</button><button class="tool serif bold">B</button><button class="tool serif ital">I</button>
          <button class="tool serif under">U</button><button class="tool serif strike">S</button><span class="vr"></span>
          ${["alignL!", "alignC!", "alignR!"].map((n) => this.tool(n))}<span class="vr"></span>
          ${["fit!", "stack!", "list!", "list!", "indent!", "indent!", "spacing!"].map((n) => this.tool(n))}
        </div>
      </div>

      <div class="bar ribbon">
        <div class="group">
          ${this.big("extrude", ["押し出し", "ﾎﾞｽ/ﾍﾞｰｽ"])}${this.big("revolve", ["回転", "ﾎﾞｽ/ﾍﾞｰｽ"])}
          ${this.smalls("s1", [["sweep", "ｽｲｰﾌﾟ"], ["loft", "ﾛﾌﾄ"], ["boundary", "境界ﾎﾞｽ/ﾍﾞｰｽ"]])}
        </div>
        <div class="group">
          ${this.big("cut", ["押し出し", "ｶｯﾄ"], "off mid")}${this.big("cut", ["穴", "ｳｨｻﾞｰﾄﾞ"], "off mid drop")}${this.big("cut", ["回転ｶｯﾄ"], "off mid")}
          ${this.smalls("s2", [["cut", "ｽｲｰﾌﾟ ｶｯﾄ", true], ["shell", "ﾛﾌﾄ ｶｯﾄ", true], ["boundary", "境界ｶｯﾄ", true]])}
        </div>
        <div class="group">
          ${this.big("fillet", ["ﾌｨﾚｯﾄ"], "thin drop")}${this.big("pattern", ["直線", "ﾊﾟﾀｰﾝ"], "thin drop")}
          ${this.smalls("s3", [["rib", "ﾘﾌﾞ", true], ["draft", "抜き勾配"], ["shell", "ｼｪﾙ", true]])}
          ${this.smalls("s4", [["wrap", "ﾗｯﾌﾟ"], ["intersect", "交差"], ["mirror", "ﾐﾗｰ"]])}
        </div>
        <div class="group">${this.big("refgeo", ["参照", "ｼﾞｵﾒﾄﾘ"], "thin drop")}${this.big("curve", ["ｶｰﾌﾞ"], "thin drop")}</div>
        <div class="group last">${this.big("instant", ["Instant3D"])}</div>
      </div>

      <main class="work">
        <div class="tabs">
          ${["ﾌｨｰﾁｬｰ", "ｽｹｯﾁ", "評価", "DimXpert", "SOLIDWORKS ｱﾄﾞｲﾝ"].map((t, i) => html`<button class=${classMap({ tab: true, sel: i === 0, latin: i > 2 })}>${t}</button>`)}
        </div>
        <div class="rails">
          <div class="stack">
            <div class="rail">${railA.map((t) => this.tool(t))}</div>
            <div class="rail sketch">${railSketch.map((t) => this.tool(t))}<button class="tool more" aria-label="more"><cad-icon name="chev"></cad-icon></button></div>
          </div>
          <div class="rail boxed">${railB.map((t) => this.tool(t))}</div>
          <div class="rail joined">${railC.map((t) => this.tool(t))}</div>
          <div class="rail joined wide">${railD.map((t) => this.tool(t))}</div>
        </div>
        <section class="panel">
          <div class="knob"></div>
          <div class="ptabs">
            ${["part", "sheet", "config", "cross", "appearance"].map((n, i) => html`<button class=${i ? "" : "sel"} aria-label=${n}><cad-icon name=${n}></cad-icon></button>`)}
            <button class="more" aria-label="more"><cad-icon name="right"></cad-icon></button>
          </div>
          <label class="filter"><cad-icon name="funnel"></cad-icon><input aria-label="Filter" /></label>
          <ul class="tree">
            ${tree.map(([d, mark, icon, text]) => html`<li class="node d${d}">${d ? html`<i>${mark}</i>` : nothing}<cad-icon name=${icon}></cad-icon><span>${text}</span></li>`)}
          </ul>
          <div class="rollback"></div>
          <div class="hscroll"><span>◂</span><div class="thumb">III</div><span>▸</span></div>
        </section>
        <section class="view">
          ${this.model()}
          <div class="hud">${hud.map((t) => this.tool(t))}</div>
          <div class="wins">${["paneL", "paneR", "min", "restore", "close"].map((n) => this.tool(n))}</div>
          <div class="pane">${["home", "can", "folderOpen", "palette", "appearance", "sheet", "chat"].map((n) => html`<button aria-label=${n}><cad-icon name=${n}></cad-icon></button>`)}</div>
          <div class="orient">*等角投影</div>
          <div class="red note2">選択面が削除される</div>
        </section>
        <div class="bottom">
          <div class="nav">${["◂", "◂", "▸", "▸"].map((n) => html`<button>${n}</button>`)}</div>
          <button class="model">ﾓﾃﾞﾙ</button><button class="motion">Motion Study 1</button>
        </div>
        <aside class="right"><div class="rail">${railRight.map((t) => this.tool(t))}</div></aside>
        <div class="handle">o</div>
        <div class="red note1"><span class="brace">}</span><span>全部サーフェスになる</span></div>
      </main>

      <footer class="bar status">
        <span>SOLIDWORKS Premium 2018 SP4.0</span>
        <div class="cells"><span class="cell">編集中： 部品</span><span class="units">MMGS<span>▴</span></span>${this.tool("boundary")}</div>
      </footer>
      <div class="corner"></div>
    </div>`;
  }
}
